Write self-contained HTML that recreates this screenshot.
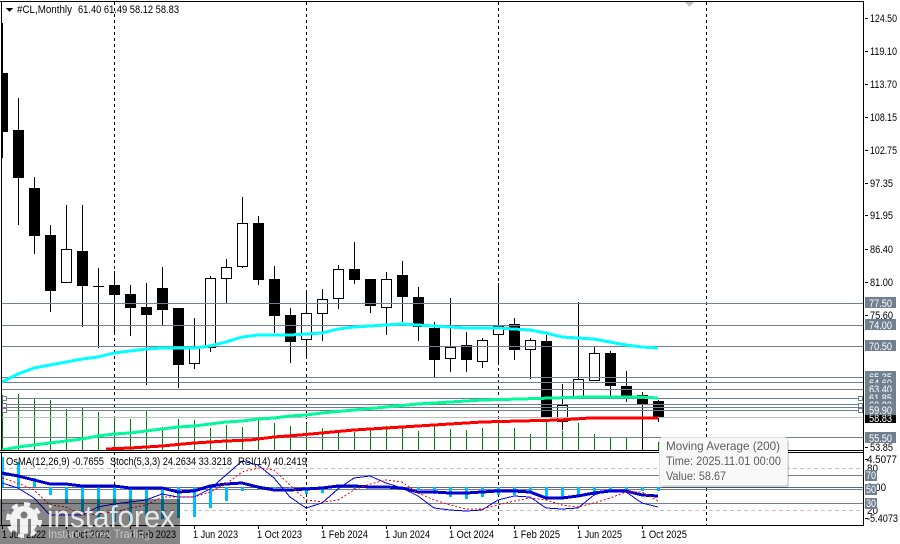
<!DOCTYPE html>
<html><head><meta charset="utf-8"><style>
html,body{margin:0;padding:0;background:#fff;width:900px;height:544px;overflow:hidden}
svg{display:block}
text{font-family:"Liberation Sans",sans-serif;font-size:11px;fill:#000}
.l{fill:#fff}
</style></head><body>
<svg width="900" height="544" viewBox="0 0 900 544" xmlns="http://www.w3.org/2000/svg">
<rect width="900" height="544" fill="#fff"/>
<g shape-rendering="crispEdges">
<!-- grid -->
<path d="M114.5 2V450M306.5 2V450M498.5 2V450M706.5 2V450M114.5 452V525M306.5 452V525M498.5 452V525M706.5 452V525" stroke="#000" stroke-dasharray="3 3" fill="none"/>
<!-- volumes -->
<path d="M2.5 395V450M18.5 394V450M34.5 399V450M50.5 400V450M66.5 409V450M82.5 408V450M98.5 412V450M114.5 416V450M130.5 419V450M146.5 411V450M162.5 427V450M178.5 419V450M194.5 420V450M210.5 428V450M226.5 425V450M242.5 427V450M258.5 420V450M274.5 423V450M290.5 426V450M306.5 424V450M322.5 428V450M338.5 431V450M354.5 432V450M370.5 429V450M386.5 426V450M402.5 428V450M418.5 431V450M434.5 426V450M450.5 429V450M466.5 430V450M482.5 428V450M498.5 422V450M514.5 428V450M530.5 434V450M546.5 421V450M562.5 431V450M578.5 423V450M594.5 434V450M610.5 437V450M626.5 437V450M642.5 433V450M658.5 442V450" stroke="#008000" fill="none"/>
<!-- wicks -->
<path d="M2.5 23V158M18.5 98V225M34.5 177V254M50.5 225V312M66.5 205V282M82.5 205V327M98.5 268V348M93 286.5H104M114.5 271V335M130.5 285V336M146.5 283V385M162.5 267V325M178.5 308V388M194.5 318V369M210.5 276V352M226.5 259V303M242.5 197V268M258.5 216V285M274.5 266V333M290.5 308V363M306.5 293V358M322.5 289V341M338.5 265V309M354.5 242V284M370.5 279V313M386.5 272V335M402.5 261V322M418.5 287V341M434.5 322V378M450.5 298V372M466.5 332V372M482.5 338V368M498.5 283V362M514.5 318V360M530.5 338V379M546.5 335V418M562.5 384V430M578.5 302V397M594.5 347V380M610.5 351V397M626.5 371V402M642.5 392V450M658.5 400V422" stroke="#000" fill="none"/>
<!-- white bodies -->
<path d="M61.5 249.5h10v33h-10zM189.5 348.5h10v15h-10zM205.5 278.5h10v69h-10zM221.5 267.5h10v11h-10zM237.5 223.5h10v43h-10zM301.5 313.5h10v26h-10zM317.5 299.5h10v14h-10zM333.5 269.5h10v29h-10zM381.5 279.5h10v28h-10zM445.5 347.5h10v11h-10zM477.5 340.5h10v21h-10zM493.5 326.5h10v8h-10zM525.5 340.5h10v9h-10zM557.5 405.5h10v16h-10zM573.5 379.5h10v18h-10zM589.5 353.5h10v27h-10z" fill="#fff" stroke="#000"/>
<!-- black bodies -->
<path d="M2 73h6v59h-6zM13 130h11v48h-11zM29 188h11v48h-11zM45 235h11v56h-11zM77 251h11v35h-11zM109 285h11v10h-11zM125 294h11v14h-11zM141 307h11v8h-11zM157 288h11v22h-11zM173 308h11v57h-11zM253 223h11v57h-11zM269 279h11v37h-11zM285 315h11v27h-11zM349 269h11v11h-11zM365 279h11v27h-11zM397 275h11v22h-11zM413 297h11v30h-11zM429 328h11v32h-11zM461 345h11v15h-11zM509 324h11v26h-11zM541 341h11v77h-11zM605 353h11v33h-11zM621 386h11v10h-11zM637 395h11v9h-11zM653 401h11v17h-11z" fill="#000"/>
<!-- horizontal levels -->
<path d="M2 303.5H863M2 325.5H863M2 346.5H863M2 377.5H863M2 382.5H863M2 389.5H863M2 398.5H863M2 404.5H863M2 407.5H863M2 410.5H863M2 437.5H863" stroke="#708090" fill="none"/>
<path d="M2 417.5H863" stroke="#c0c0c0" fill="none"/>
<path d="M2.500 396.500h4v4h-4zM2.500 403.500h4v4h-4zM2.500 408.500h4v4h-4zM858.500 396.500h4v4h-4zM858.500 403.500h4v4h-4zM858.500 408.500h4v4h-4z" fill="#fff" stroke="#708090"/>
<!-- MAs -->
<polyline points="2,382 18,374 34,368 50,365 66,362 82,359 98,357 114,353 130,351 146,349 162,348 178,348 194,348 210,346 226,342 242,337 258,335 274,335 290,335 306,334 322,333 338,329 354,327 370,326 386,325 402,324 418,325 434,326 450,327 466,328 482,328 498,328 514,329 530,330 546,333 562,337 578,338 594,339 610,342 626,345 642,347 658,348" fill="none" stroke="#00ffff" stroke-width="3"/>
<polyline points="2,450 18,447 34,445 50,443 66,441 82,439 98,436 114,434 130,433 146,431 162,429 178,427 194,426 210,424 226,422 242,421 258,419 274,418 290,416 306,415 322,413 354,410 386,407 418,404 450,402 482,400 520,399 586,397 640,397 658,398" fill="none" stroke="#00fa9a" stroke-width="3"/>
<polyline points="106,449 130,448 162,446 194,443 226,441 250,440 274,437 300,435 354,430 418,426 482,422 520,421 560,420 590,418 658,418" fill="none" stroke="#ff0000" stroke-width="3"/>
<!-- frames -->
<path d="M0 1.500H864M1.500 1V451M863.500 1V526M0 450.500H864M0 452.500H864M1.500 452V526M0 525.500H864" stroke="#000" fill="none"/>
<path d="M865 18.500h3M865 51.500h3M865 84.500h3M865 117.500h3M865 150.500h3M865 183.500h3M865 215.500h3M865 249.500h3M865 282.500h3M865 315.500h3M865 447.500h3M865 459.500h3M865 518.500h3M322.500 526v3M386.500 526v3M450.500 526v3M514.500 526v3M578.500 526v3M642.500 526v3M194.500 526v3M258.500 526v3M2.500 526v3M66.500 526v3M130.500 526v3" stroke="#000" fill="none"/>
<!-- sub pane lines -->
<path d="M2 468.500H863M2 510.500H863" stroke="#c0c0c0" stroke-dasharray="4 3" fill="none"/>
<path d="M2 475.500H863M2 489.500H863M2 503.500H863" stroke="#708090" fill="none"/>
<path d="M2 487.500H863" stroke="#5a6a78" fill="none"/>
<!-- OsMA -->
<path d="M2 457h2v30h-2zM17 462h3v25h-3zM33 478h3v9h-3zM49 487h3v8h-3zM65 487h3v16h-3zM81 487h3v25h-3zM97 487h3v33h-3zM113 487h3v35h-3zM129 487h3v34h-3zM145 487h3v32h-3zM161 487h3v32h-3zM177 487h3v31h-3zM193 487h3v30h-3zM209 487h3v21h-3zM225 487h3v14h-3zM241 487h3v4h-3zM257 487h3v2h-3zM273 487h3v1h-3zM289 487h3v1h-3zM305 487h3v7h-3zM321 487h3v6h-3zM353 486h3v3h-3zM417 487h3v3h-3zM433 487h3v7h-3zM449 487h3v10h-3zM465 487h3v12h-3zM481 487h3v10h-3zM497 487h3v8h-3zM513 487h3v8h-3zM529 487h3v6h-3zM545 487h3v10h-3zM561 487h3v10h-3zM577 487h3v10h-3zM593 487h3v6h-3zM609 487h3v4h-3zM625 487h3v3h-3zM641 487h3v4h-3zM657 487h3v4h-3z" fill="#00bfff"/>
<polyline points="2,473 18,476 34,480 50,484 66,484 82,486 98,486 114,486 130,488 146,488 162,488 178,492 194,491 210,486 226,484 242,483 258,487 274,490 290,490 306,489 322,488 338,486 354,486 370,487 386,487 402,488 418,492 434,492 450,493 466,493 482,492 498,491 514,491 530,492 546,498 562,498 578,496 594,493 610,491 626,491 642,495 658,496" fill="none" stroke="#0000cd" stroke-width="3"/>
<polyline points="2,483 18,488 34,498 50,515 66,515 82,515 98,507 114,504 130,502 146,500 162,494 178,497 194,497 210,489 226,475 242,461 258,465 274,478 290,497 306,508 322,503 338,489 354,478 370,476 386,483 402,488 418,496 434,508 450,510 466,511 482,510 498,500 514,496 530,497 546,508 562,509 578,508 594,495 610,490 626,492 642,503 658,507" fill="none" stroke="#0000ff"/>
<polyline points="2,478 18,483 34,490 50,505 66,507 82,515 98,514 114,512 130,508 146,505 162,497 178,497 194,497 210,492 226,484 242,472 258,468 274,470 290,485 306,500 322,502 338,500 354,490 370,484 386,480 402,482 418,493 434,500 450,505 466,509 482,509 498,505 514,501 530,498 546,500 562,505 578,507 594,503 610,498 626,492 642,492 658,501" fill="none" stroke="#ff0000" stroke-dasharray="2 2"/>
<path d="M6 8h7l-3.500 4z" fill="#000"/>
<path d="M685 2h9l-4.500 5z" fill="#c0c0c0"/>
</g>
<!-- header -->
<text x="17" y="13" textLength="55" lengthAdjust="spacingAndGlyphs">#CL,Monthly</text>
<text x="78" y="13" textLength="101" lengthAdjust="spacingAndGlyphs">61.40 61.49 58.12 58.83</text>
<!-- sub titles -->
<text x="6" y="465" textLength="98" lengthAdjust="spacingAndGlyphs">OsMA(12,26,9) -0.7655</text>
<text x="110" y="465" textLength="122" lengthAdjust="spacingAndGlyphs">Stoch(5,3,3) 24.2634 33.3218</text>
<text x="238" y="465" textLength="69" lengthAdjust="spacingAndGlyphs">RSI(14) 40.2419</text>
<!-- price scale -->
<g>
<text x="870" y="22" textLength="27" lengthAdjust="spacingAndGlyphs">124.50</text>
<text x="870" y="55" textLength="27" lengthAdjust="spacingAndGlyphs">119.10</text>
<text x="870" y="88" textLength="27" lengthAdjust="spacingAndGlyphs">113.70</text>
<text x="870" y="121" textLength="27" lengthAdjust="spacingAndGlyphs">108.15</text>
<text x="870" y="154" textLength="27" lengthAdjust="spacingAndGlyphs">102.75</text>
<text x="870" y="187" textLength="23" lengthAdjust="spacingAndGlyphs">97.35</text>
<text x="870" y="219" textLength="23" lengthAdjust="spacingAndGlyphs">91.95</text>
<text x="870" y="253" textLength="23" lengthAdjust="spacingAndGlyphs">86.40</text>
<text x="870" y="286" textLength="23" lengthAdjust="spacingAndGlyphs">81.00</text>
<text x="870" y="319" textLength="23" lengthAdjust="spacingAndGlyphs">75.60</text>
<text x="870" y="451" textLength="23" lengthAdjust="spacingAndGlyphs">53.85</text>
</g>
<g shape-rendering="crispEdges">
<rect x="865" y="297" width="31" height="11" fill="#708090"/>
<rect x="865" y="319" width="31" height="11" fill="#708090"/>
<rect x="865" y="340" width="31" height="11" fill="#708090"/>
</g>
<text class="l" x="869" y="307" textLength="23" lengthAdjust="spacingAndGlyphs">77.50</text>
<text class="l" x="869" y="329" textLength="23" lengthAdjust="spacingAndGlyphs">74.00</text>
<text class="l" x="869" y="350" textLength="23" lengthAdjust="spacingAndGlyphs">70.50</text>
<!-- stack -->
<rect x="865" y="371" width="31" height="11" fill="#708090" shape-rendering="crispEdges"/>
<text class="l" x="869" y="381" textLength="23" lengthAdjust="spacingAndGlyphs">65.35</text>
<rect x="865" y="377" width="31" height="11" fill="#708090" shape-rendering="crispEdges"/>
<text class="l" x="869" y="387" textLength="23" lengthAdjust="spacingAndGlyphs">64.60</text>
<rect x="865" y="383" width="31" height="11" fill="#708090" shape-rendering="crispEdges"/>
<text class="l" x="869" y="393" textLength="23" lengthAdjust="spacingAndGlyphs">63.40</text>
<rect x="865" y="392" width="31" height="11" fill="#708090" shape-rendering="crispEdges"/>
<text class="l" x="869" y="402" textLength="23" lengthAdjust="spacingAndGlyphs">61.85</text>
<rect x="865" y="399" width="31" height="11" fill="#708090" shape-rendering="crispEdges"/>
<text class="l" x="869" y="409" textLength="23" lengthAdjust="spacingAndGlyphs">60.80</text>
<rect x="865" y="413" width="31" height="10" fill="#000" shape-rendering="crispEdges"/>
<text class="l" x="869" y="422" textLength="23" lengthAdjust="spacingAndGlyphs">58.83</text>
<rect x="865" y="404" width="31" height="11" fill="#708090" shape-rendering="crispEdges"/>
<text class="l" x="869" y="414" textLength="23" lengthAdjust="spacingAndGlyphs">59.90</text>
<rect x="865" y="432" width="31" height="11" fill="#708090" shape-rendering="crispEdges"/>
<text class="l" x="869" y="442" textLength="23" lengthAdjust="spacingAndGlyphs">55.50</text>
<!-- sub scale -->
<text x="867" y="463" textLength="30" lengthAdjust="spacingAndGlyphs">4.5077</text>
<text x="867" y="472" textLength="11" lengthAdjust="spacingAndGlyphs">80</text>
<text x="867" y="491" textLength="19" lengthAdjust="spacingAndGlyphs">0.00</text>
<text x="867" y="514" textLength="11" lengthAdjust="spacingAndGlyphs">20</text>
<text x="867" y="522" textLength="31" lengthAdjust="spacingAndGlyphs">-5.4073</text>
<g shape-rendering="crispEdges" fill="#708090">
<rect x="865" y="470" width="12" height="11"/>
<rect x="865" y="484" width="12" height="11"/>
<rect x="865" y="498" width="12" height="11"/>
</g>
<text class="l" x="866" y="479" textLength="10" lengthAdjust="spacingAndGlyphs">70</text>
<text class="l" x="866" y="493" textLength="10" lengthAdjust="spacingAndGlyphs">50</text>
<text class="l" x="866" y="507" textLength="10" lengthAdjust="spacingAndGlyphs">30</text>
<!-- dates -->
<g>
<text x="2" y="538" textLength="44" lengthAdjust="spacingAndGlyphs">1 Jun 2022</text>
<text x="66" y="538" textLength="44" lengthAdjust="spacingAndGlyphs">1 Oct 2022</text>
<text x="130" y="538" textLength="46" lengthAdjust="spacingAndGlyphs">1 Feb 2023</text>
<text x="193" y="538" textLength="45" lengthAdjust="spacingAndGlyphs">1 Jun 2023</text>
<text x="257" y="538" textLength="45" lengthAdjust="spacingAndGlyphs">1 Oct 2023</text>
<text x="321" y="538" textLength="47" lengthAdjust="spacingAndGlyphs">1 Feb 2024</text>
<text x="385" y="538" textLength="45" lengthAdjust="spacingAndGlyphs">1 Jun 2024</text>
<text x="449" y="538" textLength="45" lengthAdjust="spacingAndGlyphs">1 Oct 2024</text>
<text x="513" y="538" textLength="47" lengthAdjust="spacingAndGlyphs">1 Feb 2025</text>
<text x="577" y="538" textLength="45" lengthAdjust="spacingAndGlyphs">1 Jun 2025</text>
<text x="641" y="538" textLength="46" lengthAdjust="spacingAndGlyphs">1 Oct 2025</text>
</g>
<!-- watermark -->
<rect x="0" y="499" width="180" height="45" fill="#000" fill-opacity=".48" shape-rendering="crispEdges"/>
<g>
<circle cx="24" cy="520" r="14" fill="#fff" fill-opacity=".9"/>
<circle cx="24" cy="520" r="16" fill="none" stroke="#fff" stroke-opacity=".9" stroke-width="4" stroke-dasharray="6 6.560"/>
<circle cx="24" cy="515" r="3.500" fill="#7c7c7c"/>
<path d="M18.500 519V534M29.500 519V534" stroke="#7c7c7c" stroke-width="3" fill="none"/>
</g>
<text x="47" y="527" textLength="128" lengthAdjust="spacingAndGlyphs" style="font-size:31px;fill:#fff;fill-opacity:.82">instaforex</text>
<text x="48" y="538" textLength="102" lengthAdjust="spacingAndGlyphs" style="font-size:12px;fill:#fff;fill-opacity:.55">Instant Forex Trading</text>
<!-- tooltip -->
<rect x="661" y="440" width="128" height="48" rx="3" fill="#000" fill-opacity=".18"/>
<rect x="659.500" y="437.500" width="128" height="48" rx="3" fill="#f8f8f8" stroke="#e0e0e0"/>
<text x="666" y="450" textLength="114" lengthAdjust="spacingAndGlyphs" style="font-size:12px;fill:#5c5c5c">Moving Average (200)</text>
<text x="666" y="465" textLength="115" lengthAdjust="spacingAndGlyphs" style="font-size:12px;fill:#5c5c5c">Time: 2025.11.01 00:00</text>
<text x="666" y="480" textLength="60" lengthAdjust="spacingAndGlyphs" style="font-size:12px;fill:#5c5c5c">Value: 58.67</text>
</svg>
</body></html>
